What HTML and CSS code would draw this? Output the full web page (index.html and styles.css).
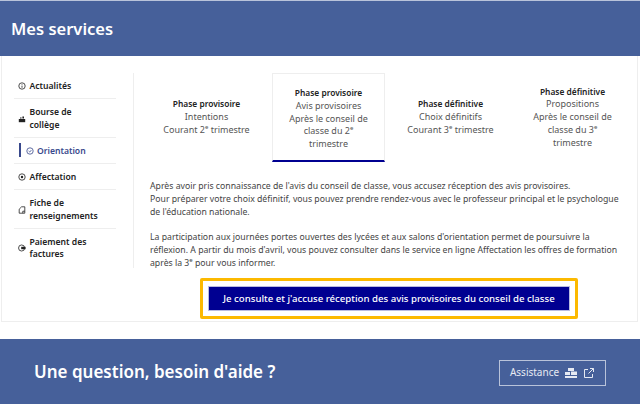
FILE: index.html
```html
<!DOCTYPE html>
<html lang="fr">
<head>
    <meta charset="UTF-8">
    <meta name="viewport" content="width=device-width, initial-scale=1.0">
    <title>Mes services</title>
    <link rel="stylesheet" href="styles.css">
</head>
<body>
    <header class="page-header">
        <h1>Mes services</h1>
    </header>

    <main class="panel">
        <!-- Side menu -->
        <nav class="side-menu">
            <a class="side-item">
                <svg class="side-icon" viewBox="0 0 10 10"><circle cx="5" cy="5" r="4"/><path d="M5 2.800v.8M5 4.500v2.700"/></svg>
                <span>Actualités</span>
            </a>
            <a class="side-item">
                <svg class="side-icon" viewBox="0 0 10 10"><path class="filled" d="M1 5h8v4H1z"/><path class="filled" d="M2.500 3h2v1.500h-2zM5.500 2h2v2.500h-2z"/></svg>
                <span>Bourse de collège</span>
            </a>
            <a class="side-item active">
                <svg class="side-icon" viewBox="0 0 10 10"><circle cx="5" cy="5" r="4"/><path d="M3.300 5l1.300 1.300 2.100-2.400"/></svg>
                <span>Orientation</span>
            </a>
            <a class="side-item">
                <svg class="side-icon" viewBox="0 0 10 10"><circle cx="5" cy="5" r="4"/><circle cx="5" cy="5" r="1.500" class="filled"/></svg>
                <span>Affectation</span>
            </a>
            <a class="side-item">
                <svg class="side-icon" viewBox="0 0 10 10"><path d="M1.500 9V4l3-3h4v8zM6 9V6.500h2.500"/></svg>
                <span>Fiche de renseignements</span>
            </a>
            <a class="side-item">
                <svg class="side-icon" viewBox="0 0 10 10"><circle cx="4.500" cy="5" r="3.800"/><path class="filled" d="M4 3.500h5.500v3H4z"/></svg>
                <span>Paiement des factures</span>
            </a>
        </nav>

        <section class="content">
            <!-- Phases -->
            <div class="phases">
                <div class="phase">
                    <strong>Phase provisoire</strong>
                    Intentions<br>
                    Courant 2<sup>e</sup> trimestre
                </div>
                <div class="phase current">
                    <strong>Phase provisoire</strong>
                    Avis provisoires<br>
                    Après le conseil de classe du 2<sup>e</sup> trimestre
                </div>
                <div class="phase">
                    <strong>Phase définitive</strong>
                    Choix définitifs<br>
                    Courant 3<sup>e</sup> trimestre
                </div>
                <div class="phase">
                    <strong>Phase définitive</strong>
                    Propositions<br>
                    Après le conseil de classe du 3<sup>e</sup> trimestre
                </div>
            </div>

            <div class="intro">
                <p>Après avoir pris connaissance de l'avis du conseil de classe, vous accusez réception des avis provisoires.<br>
                Pour préparer votre choix définitif, vous pouvez prendre rendez-vous avec le professeur principal et le psychologue de l'éducation nationale.</p>
                <p>La participation aux journées portes ouvertes des lycées et aux salons d'orientation permet de poursuivre la réflexion. A partir du mois d'avril, vous pouvez consulter dans le service en ligne Affectation les offres de formation après la 3<sup>e</sup> pour vous informer.</p>
            </div>

            <div class="action-frame">
                <button class="action-btn">Je consulte et j'accuse réception des avis provisoires du conseil de classe</button>
            </div>
        </section>
    </main>

    <footer class="help">
        <h2>Une question, besoin d'aide ?</h2>
        <a class="help-link">
            Assistance
            <svg class="help-icon" viewBox="0 0 12 10"><path class="filled" d="M3 0h6v3H3zM0 4h5v3H0zM6 3.500h6v3.500H6zM0 8h12v2H0z"/></svg>
            <svg class="help-icon" viewBox="0 0 12 10"><path d="M5 1.500H1.500v8h8V6M7 .5h3.500V4M10.500 .5L5.500 5.500"/></svg>
        </a>
    </footer>
</body>
</html>
```

FILE: styles.css
```css
body {
    margin: 0;
    width: 640px;
    height: 404px;
    overflow: hidden;
    background-color: #fff;
    color: #3a3a3a;
    font-family: "Noto Sans", sans-serif;
    font-size: 9px;
    line-height: 12.75px;
}
.page-header {
    height: 55px;
    border-top: 1px solid #b9c3da;
    background-color: #46609a;
    display: flex;
    align-items: center;
    padding-left: 11px;
}
.page-header h1 {
    margin: 0;
    padding-top: 2px;
    color: #fff;
    font-size: 16.5px;
    font-weight: 600;
}
.panel {
    height: 266px;
    box-sizing: border-box;
    margin-left: 1px;
    margin-right: 2px;
    border-bottom: 1px solid #eee;
    border-left: 1px solid #eee;
    border-right: 1px solid #eee;
    display: flex;
}
.side-menu {
    width: 102px;
    margin-left: 12px;
    padding-top: 17px;
    flex-shrink: 0;
}
.side-item {
    display: flex;
    align-items: center;
    gap: 3.5px;
    padding: 6.9px 20px 5.4px 4px;
    border-bottom: 1px solid #eee;
    color: #222;
    font-size: 8.6px;
    font-weight: 600;
}
.side-item:last-child {
    border-bottom: none;
}
.side-item.active {
    color: #39498c;
    position: relative;
    gap: 3px;
}
.side-item.active .side-icon {
    margin-left: 8px;
}
.side-item.active::before {
    content: "";
    position: absolute;
    left: 5px;
    top: 5px;
    width: 2px;
    height: 14px;
    background-color: #39498c;
}
.side-icon {
    width: 8px;
    height: 8px;
    flex-shrink: 0;
    fill: none;
    stroke: currentColor;
    stroke-width: 1;
}
.filled {
    fill: currentColor;
    stroke: none;
}
.content {
    margin: 17px 0 0 17px;
    height: 195px;
    border-left: 1px solid #eee;
    padding-left: 16px;
    width: 490px;
    flex-shrink: 0;
}
.phases {
    display: grid;
    grid-template-columns: repeat(4, 113px);
    gap: 9px;
    height: 89px;
}
.phase {
    align-self: center;
    text-align: center;
    padding: 0 14px;
    color: #555;
}
.phase:first-child, .phase:nth-child(3) {
    padding: 0;
}
.phase strong {
    display: block;
    color: #222;
    font-size: 8.4px;
    font-weight: 600;
}
.phase sup, .intro sup {
    font-size: 6px;
    line-height: 0;
}
.phase.current {
    align-self: stretch;
    box-sizing: border-box;
    padding-top: 13px;
    border: 1px solid #eee;
    border-bottom: 2px solid #000091;
}
.intro {
    margin-top: 18px;
    width: 471px;
    color: #444;
    font-size: 8.7px;
}
.intro p {
    margin: 0 0 12.75px;
}
.intro p:last-child {
    margin-bottom: 0;
}
.action-frame {
    width: 378px;
    height: 41px;
    margin: 9px 0 0 50px;
    box-sizing: border-box;
    border: 3px solid #fcb900;
    border-radius: 2px;
    padding: 5px;
}
.action-btn {
    width: 100%;
    height: 100%;
    border: 1px solid #b9bce0;
    background-color: #000091;
    color: #fff;
    font-family: inherit;
    font-size: 9.65px;
    font-weight: 500;
    padding: 0;
}
.help {
    margin-top: 17px;
    height: 65px;
    box-sizing: border-box;
    padding: 2px 34px 0;
    background-color: #46609a;
    display: flex;
    align-items: center;
    justify-content: space-between;
}
.help h2 {
    margin: 0;
    color: #fff;
    font-size: 17px;
    font-weight: 600;
}
.help-link {
    width: 107px;
    height: 26px;
    box-sizing: border-box;
    border: 1px solid #b9c3da;
    display: flex;
    align-items: center;
    justify-content: center;
    gap: 6px;
    color: #e6eaf3;
    font-size: 10px;
}
.help-icon {
    width: 12px;
    height: 10px;
    fill: none;
    stroke: currentColor;
    stroke-width: 1;
}
```
